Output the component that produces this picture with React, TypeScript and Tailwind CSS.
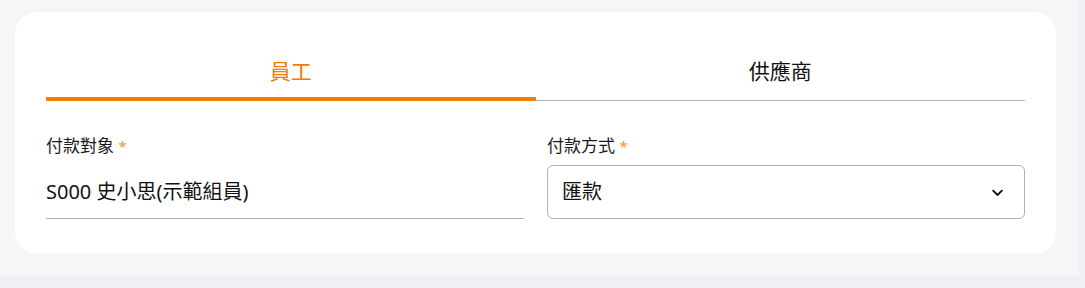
import { useState } from "react";

const font = { fontFamily: '"Noto Sans", "Noto Sans CJK TC", sans-serif' };

export default function App() {
  const [tab, setTab] = useState(0);
  const tabs = ["員工", "供應商"];

  return (
    <div className="w-[1085px] h-[288px] bg-[#eff0f5]" style={font}>
      <div className="w-[1079px] h-[277px] bg-[#f5f6f8] pl-[15px] pt-[12px]">
        <div className="w-[1041px] h-[242px] bg-white rounded-[22px] px-[31px] pt-[32px]">
          <div className="flex border-b border-[#b0b0b0]">
            {tabs.map((t, i) => (
              <button
                key={t}
                onClick={() => setTab(i)}
                className={`flex-1 h-[57px] -mb-px flex items-center justify-center text-[21px] pt-[2px] border-b-[4px] ${
                  tab === i
                    ? "text-[#f07c00] border-[#f07c00]"
                    : "text-[#111] border-transparent"
                }`}
              >
                {t}
              </button>
            ))}
          </div>

          <div className="grid grid-cols-2 gap-x-[23px] mt-[35px]">
            <div>
              <label className="block text-[17px] leading-[20px] text-[#1a1a1a]">
                付款對象 <span className="text-[#f7941d] text-[15px]">*</span>
              </label>
              <div className="mt-[9px] h-[54px] border-b border-[#b0b0b0] flex items-center text-[20px] text-[#111]">
                S000 史小思(示範組員)
              </div>
            </div>
            <div>
              <label className="block text-[17px] leading-[20px] text-[#1a1a1a]">
                付款方式 <span className="text-[#f7941d] text-[15px]">*</span>
              </label>
              <div className="mt-[9px] h-[54px] border border-[#b3b3b3] rounded-[6px] flex items-center justify-between pl-[14px] pr-[19px] text-[20px] text-[#111]">
                <span>匯款</span>
                <svg className="w-[15px] h-[15px]" viewBox="0 0 24 24" fill="none" stroke="#111" strokeWidth={3} strokeLinecap="round" strokeLinejoin="round">
                  <path d="M5 9l7 7 7-7" />
                </svg>
              </div>
            </div>
          </div>
        </div>
      </div>
    </div>
  );
}
